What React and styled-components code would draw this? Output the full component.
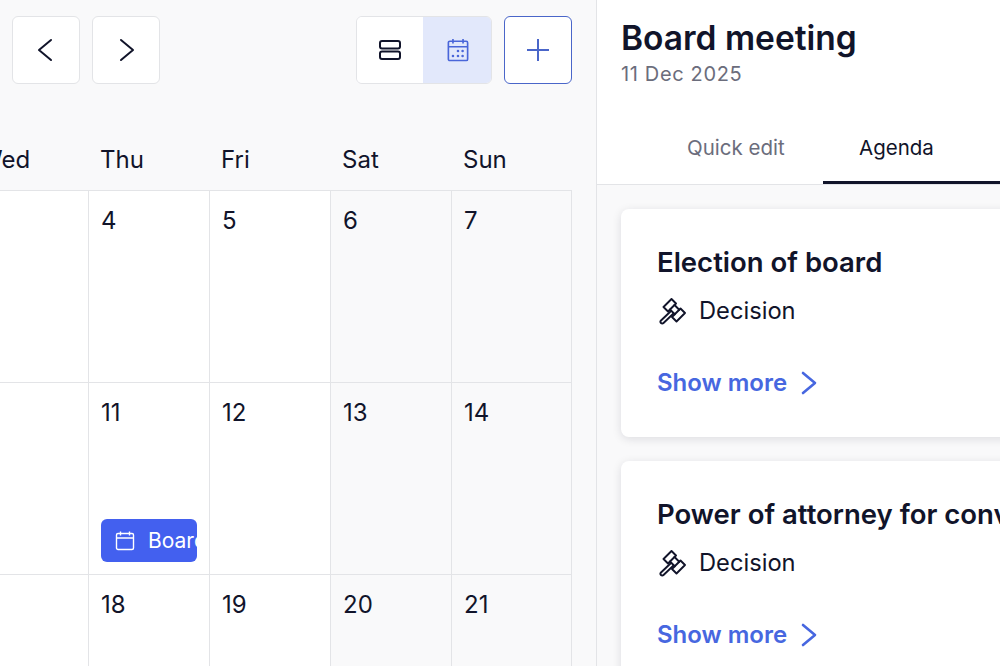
import React from 'react'
import styled, { createGlobalStyle } from 'styled-components'

const GlobalStyle = createGlobalStyle`
  html, body {
    margin: 0;
    padding: 0;
    background: #fff;
    font-family: Inter, "Liberation Sans", sans-serif;
    color: #11142a;
  }
  * { box-sizing: border-box; }
`

const Page = styled.div`
  display: flex;
  width: 1000px;
  height: 666px;
  overflow: hidden;
`

const CalendarPane = styled.section`
  flex: none;
  width: 597px;
  height: 666px;
  overflow: hidden;
  background: #f9f9fa;
  border-right: 1px solid #e3e4e7;
`

const Toolbar = styled.div`
  display: flex;
  align-items: center;
  justify-content: space-between;
  padding: 16px 24px 0 12px;
`

const ButtonGroup = styled.div`
  display: flex;
  gap: 12px;
`

const SquareButton = styled.button`
  display: flex;
  align-items: center;
  justify-content: center;
  width: 68px;
  height: 68px;
  padding: 0;
  background: #fff;
  border: 1px solid ${(p) => (p.$outlined ? '#4a66c9' : '#e3e4e7')};
  border-radius: 6px;
  color: ${(p) => (p.$outlined ? '#4a66c9' : '#11142a')};
`

const ViewToggle = styled.div`
  display: flex;
  border: 1px solid #e3e4e7;
  border-radius: 6px;
  overflow: hidden;
`

const ToggleOption = styled.button`
  display: flex;
  align-items: center;
  justify-content: center;
  width: ${(p) => (p.$active ? '68px' : '66px')};
  height: 66px;
  padding: ${(p) => (p.$active ? '0 0 0 2px' : '0')};
  border: 0;
  background: ${(p) => (p.$active ? '#e2e8fb' : '#fff')};
  color: ${(p) => (p.$active ? '#4a66d9' : '#11142a')};
`

const CalendarGrid = styled.div`
  display: grid;
  grid-template-columns: repeat(4, 121px) 120px;
  width: 604px;
  margin-left: -32px;
  margin-top: 46px;
`

const WeekdayLabel = styled.div`
  height: 60px;
  padding: 16px 0 0 11px;
  font-size: 24px;
  line-height: 28px;
  color: #11142a;
`

const DayCell = styled.div`
  height: 192px;
  padding: 16px 12px 0 12px;
  background: ${(p) => (p.$weekend ? '#f9f9fa' : '#fff')};
  border-top: 1px solid #e3e4e7;
  border-right: 1px solid #e3e4e7;
  display: flex;
  flex-direction: column;
  justify-content: space-between;
`

const DayNumber = styled.div`
  font-size: 24px;
  line-height: 28px;
`

const EventChip = styled.div`
  display: flex;
  align-items: center;
  gap: 13px;
  width: 96px;
  height: 43px;
  margin-bottom: 12px;
  padding-left: 14px;
  overflow: hidden;
  flex: none;
  border-radius: 6px;
  background: #4360ef;
  color: #fff;
  font-size: 21px;
  white-space: nowrap;

  svg { flex: none; }
`

const DetailPane = styled.section`
  flex: 1;
  min-width: 0;
  height: 666px;
  overflow: hidden;
  background: #f9f9fa;
`

const DetailHeader = styled.header`
  background: #fff;
  border-bottom: 1px solid #e3e4e7;
  height: 185px;
  display: flex;
  flex-direction: column;
`

const Title = styled.h1`
  margin: 17px 0 0 24px;
  font-size: 33.5px;
  line-height: 42px;
  font-weight: 600;
  color: #11142a;
`

const DateLine = styled.div`
  margin: 0 0 0 24px;
  font-size: 20px;
  line-height: 30px;
  letter-spacing: 0.65px;
  color: #6b6d7c;
`

const Tabs = styled.nav`
  display: flex;
  margin-top: auto;
  padding-left: 54px;
`

const Tab = styled.div`
  flex: none;
  width: ${(p) => (p.$active ? '240px' : '172px')};
  height: 70px;
  padding: 19px 0 0 36px;
  font-size: 20.5px;
  line-height: 30px;
  color: ${(p) => (p.$active ? '#11142a' : '#6b6d7c')};
  border-bottom: 3px solid ${(p) => (p.$active ? '#11142a' : 'transparent')};
`

const AgendaList = styled.div`
  display: flex;
  flex-direction: column;
  gap: 24px;
  padding: 24px 0 0 24px;
  width: 800px;
`

const AgendaCard = styled.article`
  height: 228px;
  padding: 35px 36px 36px;
  background: #fff;
  border-radius: 8px;
  box-shadow: 0 2px 10px rgba(17, 20, 42, 0.12);
`

const CardTitle = styled.h2`
  margin: 0;
  font-size: 27.5px;
  line-height: 36px;
  font-weight: 600;
  white-space: nowrap;
  color: #11142a;
`

const CardType = styled.div`
  display: flex;
  align-items: center;
  gap: 13px;
  margin-top: 13px;
  padding-left: 2px;
  font-size: 23.7px;
  line-height: 36px;
  color: #11142a;
`

const ShowMore = styled.a`
  display: inline-flex;
  align-items: center;
  gap: 5px;
  margin-top: 36px;
  font-size: 24px;
  line-height: 36px;
  font-weight: 600;
  color: #4767e0;
`

const Chevron = ({ left, color = 'currentColor', width = 2 }) => (
  <svg width="32" height="32" viewBox="0 0 32 32" fill="none" stroke={color} strokeWidth={width} strokeLinecap="round" strokeLinejoin="round">
    <path d={left ? 'M21 6 9 16l12 10' : 'M11 6l12 10-12 10'} />
  </svg>
)

const RowsIcon = () => (
  <svg width="22" height="20" viewBox="0 0 22 20" fill="none" stroke="currentColor" strokeWidth="2">
    <rect x="1" y="1" width="20" height="7.5" rx="2" />
    <rect x="1" y="11.5" width="20" height="7.5" rx="2" />
  </svg>
)

const CalendarDotsIcon = () => (
  <svg width="22" height="24" viewBox="0 0 24 26" fill="none" stroke="currentColor" strokeWidth="1.8">
    <rect x="1.5" y="3.5" width="21" height="21" rx="1.5" />
    <path d="M1.5 9.5h21M6.5 1v5M17.5 1v5" />
    <g fill="currentColor" stroke="none">
      <circle cx="12" cy="14" r="1.4" />
      <circle cx="17" cy="14" r="1.4" />
      <circle cx="6.5" cy="19.5" r="1.4" />
      <circle cx="12" cy="19.5" r="1.4" />
      <circle cx="17" cy="19.5" r="1.4" />
    </g>
  </svg>
)

const CalendarIcon = () => (
  <svg width="20" height="20" viewBox="0 0 20 20" fill="none" stroke="currentColor" strokeWidth="1.4">
    <rect x="1.5" y="2.5" width="17" height="16" rx="1.5" />
    <path d="M1.5 7h17M5.5 0.5v4M14.5 0.5v4" />
  </svg>
)

const PlusIcon = () => (
  <svg width="24" height="24" viewBox="0 0 24 24" fill="none" stroke="currentColor" strokeWidth="2">
    <path d="M1 12h22M12 1v22" />
  </svg>
)

const GavelIcon = () => (
  <svg width="27" height="27" viewBox="0 0 27 27" fill="none" stroke="#11142a" strokeWidth="1.9" strokeLinejoin="round" strokeLinecap="round">
    <path d="M4.5 9 12.5 1 17 5.5 9 13.5Z" />
    <path d="M13 19 21.5 10.5 26 15 17.5 23.5Z" />
    <path d="M11 11.5 15.75 16.25M15.5 7 20.25 11.75" />
    <path d="M12 13 2 22.5a1.7 1.7 0 0 0 2.5 2.5L14.5 15.5" />
  </svg>
)

const weekdays = ['Wed', 'Thu', 'Fri', 'Sat', 'Sun']
const weeks = [
  [null, 4, 5, 6, 7],
  [null, 11, 12, 13, 14],
  [null, 18, 19, 20, 21],
]

const agenda = ['Election of board', 'Power of attorney for conveyance of shares']

const App = () => (
  <Page>
    <GlobalStyle />
    <CalendarPane>
      <Toolbar>
        <ButtonGroup>
          <SquareButton><Chevron left /></SquareButton>
          <SquareButton><Chevron /></SquareButton>
        </ButtonGroup>
        <ButtonGroup>
          <ViewToggle>
            <ToggleOption><RowsIcon /></ToggleOption>
            <ToggleOption $active><CalendarDotsIcon /></ToggleOption>
          </ViewToggle>
          <SquareButton $outlined><PlusIcon /></SquareButton>
        </ButtonGroup>
      </Toolbar>
      <CalendarGrid>
        {weekdays.map((day) => (
          <WeekdayLabel key={day}>{day}</WeekdayLabel>
        ))}
        {weeks.flat().map((date, i) => (
          <DayCell key={i} $weekend={i % 5 > 2}>
            <DayNumber>{date}</DayNumber>
            {date === 11 && (
              <EventChip><CalendarIcon />Board meeting</EventChip>
            )}
          </DayCell>
        ))}
      </CalendarGrid>
    </CalendarPane>
    <DetailPane>
      <DetailHeader>
        <Title>Board meeting</Title>
        <DateLine>11 Dec 2025</DateLine>
        <Tabs>
          <Tab>Quick edit</Tab>
          <Tab $active>Agenda</Tab>
        </Tabs>
      </DetailHeader>
      <AgendaList>
        {agenda.map((item) => (
          <AgendaCard key={item}>
            <CardTitle>{item}</CardTitle>
            <CardType><GavelIcon />Decision</CardType>
            <ShowMore>Show more <Chevron color="#4767e0" width={2.6} /></ShowMore>
          </AgendaCard>
        ))}
      </AgendaList>
    </DetailPane>
  </Page>
)

export default App
